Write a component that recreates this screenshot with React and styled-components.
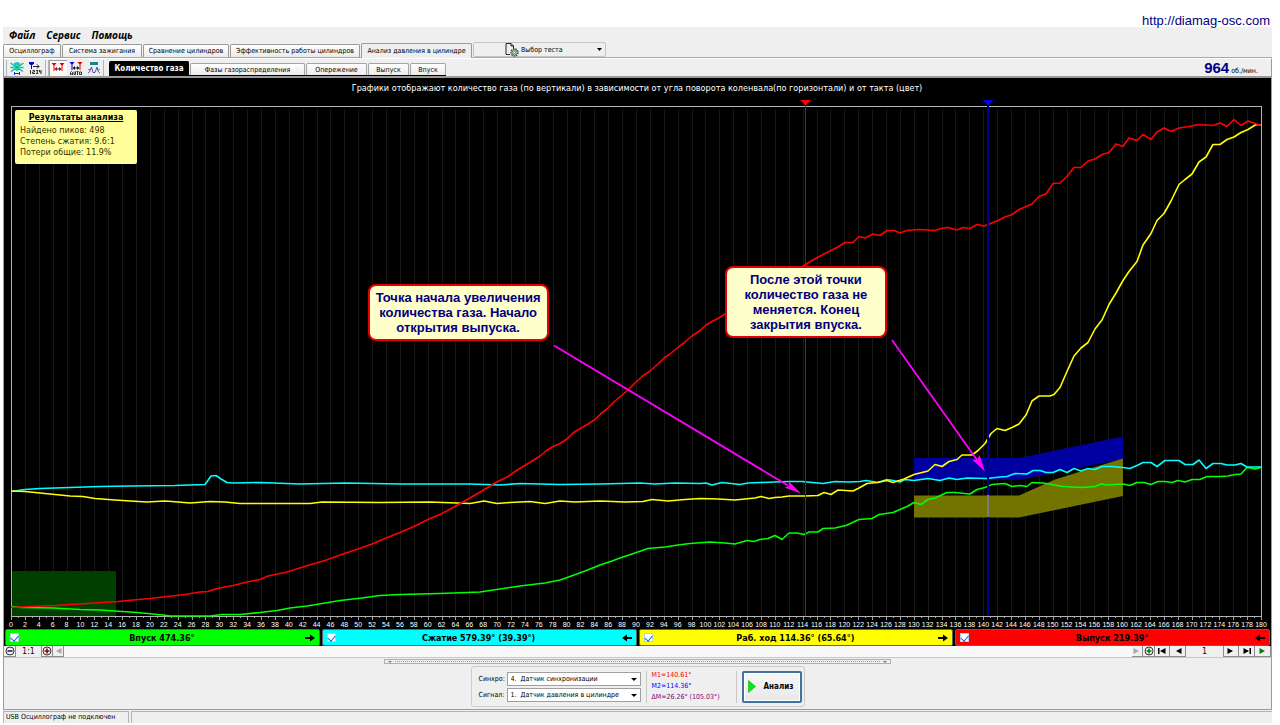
import React, { useState } from 'react';
import styled, { createGlobalStyle } from 'styled-components';

const GlobalStyle = createGlobalStyle`
  * {
    box-sizing: border-box;
  }
  body {
    margin: 0;
    background: #ffffff;
    color: #000000;
    font-family: "DejaVu Sans Condensed", "DejaVu Sans", sans-serif;
    font-size: 7px;
    line-height: 10px;
  }
  button, input, select {
    margin: 0;
    padding: 0;
    border: 0;
    border-radius: 0;
    background: none;
    color: inherit;
    font: inherit;
  }
`;

const Page = styled.div`
  padding: 0 8px 3px 3px;
`;

const SiteHeader = styled.header`
  display: flex;
  justify-content: flex-end;
  align-items: flex-end;
  height: 27px;
  padding-right: 2px;
`;

const SiteLink = styled.a`
  color: #000080;
  font-family: "Liberation Sans", Arial, sans-serif;
  font-size: 13px;
  line-height: 13px;
  text-decoration: none;
`;

const Window = styled.main`
  background: #efefef;
`;

const MenuBar = styled.nav`
  display: flex;
  gap: 11px;
  height: 16px;
  padding: 0 6px;
`;

const MenuItem = styled.button`
  font-family: "Open Sans", sans-serif;
  font-size: 10px;
  line-height: 14px;
  font-weight: 700;
  font-style: italic;
`;

const TabRow = styled.div`
  display: flex;
  align-items: flex-end;
  gap: 1px;
  height: 15px;
  border-bottom: 1px solid #a8a8a8;
`;

const Tab = styled.button`
  width: ${p => p.w}px;
  height: ${p => (p.active ? 15 : 13)}px;
  margin-bottom: ${p => (p.active ? -1 : 0)}px;
  border: 1px solid #9a9a9a;
  border-bottom: 0;
  border-radius: 2px 2px 0 0;
  background: ${p => (p.active ? '#efefef' : 'linear-gradient(#ffffff, #ebebeb)')};
  white-space: nowrap;
`;

const TestPicker = styled.button`
  display: flex;
  align-items: center;
  gap: 2px;
  width: 133px;
  height: 15px;
  padding: 0 3px 0 31px;
  border: 1px solid #c4c4c4;
  border-radius: 2px;
  text-align: left;
  span {
    flex: 1;
  }
`;

const Frame = styled.section`
  border: 1px solid #9c9c9c;
  border-top-color: #ffffff;
`;

const ToolRow = styled.div`
  display: flex;
  align-items: center;
  height: 19px;
  border-bottom: 2px solid #9a9a9a;
`;

const ToolGroup = styled.div`
  display: flex;
  align-items: center;
  height: 16px;
  margin-left: 2px;
  padding: 0 ${p => (p.wide ? 1 : 0)}px;
  border-left: 1px solid #b4b4b4;
  border-right: 1px solid #b4b4b4;
`;

const ToolButton = styled.button`
  display: flex;
  align-items: center;
  justify-content: center;
  width: 18px;
  height: 16px;
  background: ${p => (p.pressed ? '#fafafa' : 'none')};
  box-shadow: ${p => (p.pressed ? 'inset 1px 1px 0 #a0a0a0' : 'none')};
`;

const InnerTabs = styled.div`
  display: flex;
  align-items: flex-end;
  align-self: flex-end;
  gap: 1px;
  margin-left: 5px;
  border-bottom: 1px solid #000000;
`;

const InnerTab = styled.button`
  width: ${p => p.w}px;
  height: ${p => (p.active ? 14 : 12)}px;
  border: 1px solid ${p => (p.active ? '#000000' : '#a4a4a4')};
  border-bottom: 0;
  border-radius: 2px 2px 0 0;
  background: ${p => (p.active ? '#000000' : 'linear-gradient(#ffffff, #ebebeb)')};
  color: ${p => (p.active ? '#ffffff' : '#000000')};
  font-size: ${p => (p.active ? 8 : 7)}px;
  font-weight: ${p => (p.active ? 700 : 400)};
  white-space: nowrap;
`;

const Rpm = styled.div`
  display: flex;
  align-items: baseline;
  gap: 2px;
  margin-left: auto;
  padding-right: 13px;
  strong {
    color: #000080;
    font-family: "Liberation Sans", Arial, sans-serif;
    font-size: 15px;
    line-height: 17px;
  }
`;

const ChartBox = styled.div`
  position: relative;
  background: #000000;
  > svg {
    display: block;
    width: 100%;
    height: auto;
  }
`;

const AxisText = styled.text`
  fill: #ffffff;
  font-family: "Liberation Sans", Arial, sans-serif;
  font-size: 7px;
  text-anchor: middle;
`;

const TitleText = styled.text`
  fill: #ffffff;
  font-size: 9px;
  text-anchor: middle;
`;

const Results = styled.aside`
  position: absolute;
  left: 11px;
  top: 32px;
  width: 122px;
  padding: 2px 5px 6px;
  border-radius: 2px;
  background: #ffff99;
  color: #333300;
  font-family: "DejaVu Sans", Verdana, sans-serif;
  font-size: 8px;
  line-height: 11px;
  h2 {
    margin: 0 0 2px;
    color: #000000;
    font-size: 8px;
    text-align: center;
    text-decoration: underline;
  }
  p {
    margin: 0;
  }
`;

const Callout = styled.div`
  position: absolute;
  left: ${p => p.left}%;
  top: ${p => p.top}%;
  width: ${p => p.w}px;
  padding: 4px 6px;
  border: 2px solid #e80000;
  border-radius: 8px;
  background: #ffffcc;
  color: #000080;
  font-family: "Liberation Sans", Arial, sans-serif;
  font-size: 13px;
  font-weight: 700;
  line-height: 15px;
  text-align: center;
  white-space: nowrap;
`;

const PhaseRow = styled.div`
  display: grid;
  grid-template-columns: repeat(4, 1fr);
  gap: 2px;
  padding: 1px 1px 0;
  background: #000000;
`;

const Phase = styled.label`
  display: flex;
  align-items: center;
  height: 17px;
  padding: 0 4px;
  border: 1px solid #5a6a5a;
  border-radius: 2px;
  background: ${p => p.color};
  font-size: 9px;
  font-weight: 700;
  span {
    flex: 1;
    text-align: center;
  }
`;

const Check = styled.input`
  appearance: none;
  display: flex;
  justify-content: center;
  width: 9px;
  height: 9px;
  border: 1px solid #b8d0e0;
  background: #ffffff;
  &:checked::after {
    content: "";
    width: 4px;
    height: 6px;
    border: solid #0068e0;
    border-width: 0 1px 1px 0;
    transform: rotate(40deg);
  }
`;

const ScrollRow = styled.div`
  display: flex;
  align-items: stretch;
  height: 12px;
  border-bottom: 1px solid #c8c8c8;
  background: #f9f9f9;
`;

const ScrollButton = styled.button`
  display: flex;
  align-items: center;
  justify-content: center;
  width: ${p => p.w}px;
  border-right: 1px solid #8c8c8c;
  border-bottom: 1px solid #8c8c8c;
  background: #f0f0f0;
`;

const ScrollValue = styled.output`
  width: ${p => p.w}px;
  border-right: 1px solid #8c8c8c;
  background: #f0f0f0;
  color: #300010;
  font-family: "DejaVu Sans", Verdana, sans-serif;
  font-size: 8px;
  line-height: 12px;
  text-align: center;
`;

const ScrollTrack = styled.div`
  flex: 1;
`;

const BottomPanel = styled.div`
  display: flex;
  flex-direction: column;
  align-items: center;
  gap: 2px;
  padding: 1px 0 2px;
`;

const Splitter = styled.div`
  display: flex;
  align-items: center;
  justify-content: space-between;
  width: 40%;
  height: 5px;
  padding: 0 3px;
  border: 1px solid #b0b0b0;
  &::before, &::after {
    content: "";
    border: 2px solid transparent;
    border-top-color: #3388ee;
    border-bottom: 0;
  }
  i {
    flex: 1;
    margin: 0 3px;
    border-top: 1px dotted #66aaee;
  }
`;

const ControlGroup = styled.div`
  display: flex;
  align-items: center;
  gap: 5px;
  height: 41px;
  padding: 0 2px 0 7px;
  border: 1px solid #cccccc;
  border-radius: 3px;
`;

const Fields = styled.div`
  display: grid;
  grid-template-columns: 26px 134px;
  align-items: center;
  gap: 2px;
  label {
    white-space: nowrap;
  }
`;

const SelectBox = styled.div`
  position: relative;
  &::after {
    content: "";
    position: absolute;
    right: 4px;
    top: 6px;
    border: 3px solid transparent;
    border-top-color: #000000;
    border-bottom: 0;
    pointer-events: none;
  }
`;

const Select = styled.select`
  appearance: none;
  display: block;
  width: 100%;
  height: 14px;
  padding: 0 3px;
  border: 1px solid #a0a0a0;
  background: #ffffff;
`;

const Divider = styled.div`
  width: 1px;
  height: 32px;
  background: #c8c8c8;
`;

const Markers = styled.div`
  width: 79px;
  line-height: 11px;
  white-space: nowrap;
`;

const Marker = styled.div`
  color: ${p => p.color};
`;

const AnalyzeButton = styled.button`
  display: flex;
  align-items: center;
  gap: 8px;
  width: 60px;
  height: 32px;
  padding-left: 4px;
  border: 2px solid #42729c;
  border-radius: 2px;
  background: linear-gradient(#f6f6f6, #e8e8e8);
  box-shadow: inset 0 0 0 1px #ffffff;
  font-size: 8px;
  font-weight: 700;
`;

const StatusBar = styled.footer`
  display: flex;
  gap: 2px;
  height: 13px;
  padding-top: 1px;
`;

const StatusCell = styled.div`
  flex: ${p => (p.grow ? '1' : '0 0 126px')};
  padding-left: 2px;
  border: 1px solid #b4b4b4;
  border-width: 1px ${p => (p.grow ? 0 : 1)}px 0 1px;
  white-space: nowrap;
`;

const TABS = [
  ['Осциллограф', 58],
  ['Система зажигания', 80],
  ['Сравнение цилиндров', 86],
  ['Эффективность работы цилиндров', 130],
  ['Анализ давления в цилиндре', 111],
];

const INNER_TABS = [
  ['Количество газа', 80],
  ['Фазы газораспределения', 115],
  ['Опережение', 61],
  ['Выпуск', 41],
  ['Впуск', 36],
];

const PHASES = [
  { id: 'intake', text: 'Впуск 474.36°', color: '#00ff00', dir: 1 },
  { id: 'compression', text: 'Сжатие 579.39° (39.39°)', color: '#00ffff', dir: -1 },
  { id: 'power', text: 'Раб. ход 114.36° (65.64°)', color: '#ffff00', dir: 1 },
  { id: 'exhaust', text: 'Выпуск 219.39°', color: '#ff0000', dir: -1 },
];

const CURVES = {
  intake: '11,606.5 20,607.5 53,608 80,609.5 100,610 137,612.5 163,615 170,616 210,616 222,614.5 240,614.5 260,612.5 277,610.5 290,608 307,606 340,600.5 362,598 380,595.5 400,594.5 440,593.5 480,592 500,589 520,586 545,583 560,580 570,576.5 585,571 600,565 612,561 620,558 632,554 648,548.5 665,547 678,545 690,543.5 710,542 725,543 735,544 747,540.5 754,541.5 760,539.5 768,538.5 775,535.5 782,539.5 789,533 797,533 804,534.5 809,532 818,532 823,528.5 835,528 846,525.5 859,519.5 872,518.5 879,514.5 893,512.5 907,506.5 914,502.5 921,504.5 928,499.5 935,498 947,492.5 955,492.5 970,494 977,489.5 985,487.5 992,484.5 1005,483.5 1012,486.5 1020,485.5 1027,486.5 1032,482.5 1043,483 1063,486.5 1082,487.5 1095,486.5 1101,484 1108,485 1123,484 1130,485.5 1137,482.5 1144,482.5 1151,484.5 1158,481.5 1165,481.5 1172,482.5 1178,480.5 1185,482 1192,479.5 1200,479.5 1207,476.5 1220,476.5 1228,476 1235,474.5 1241,474 1247,467.5 1255,469 1261,467.5',
  compression: '11,491.5 25,489.5 40,488.5 70,487.5 100,486.5 130,486 175,485.5 205,484.5 211,476 216,475.5 221,479 227,482.5 233,483 260,482.5 300,484 345,483 400,484 470,484 500,485 520,483.5 560,484.5 600,484 640,483 655,484 675,483 700,483.5 706,483 712,485 722,482.5 740,484.5 748,483 760,482.5 775,482 789,481.5 802,481.5 823,483.5 835,481.5 848,482 860,481.5 866,480.5 878,482.5 887,479.5 893,480.5 900,482 905,479.5 914,480.5 928,478.5 940,480.5 949,478 957,479.5 967,478 987,478.5 1000,477 1007,476.5 1015,473.5 1027,474 1033,470.5 1040,470.5 1046,472.5 1053,472.5 1060,469.5 1067,472.5 1074,468.5 1081,471 1088,468.5 1095,469.5 1102,466.5 1112,466.5 1123,467.5 1130,468.5 1137,465.5 1143,462.5 1151,462.5 1157,466.5 1165,460.5 1179,460.5 1185,464.5 1193,464.5 1199,460 1206,468.5 1213,463.5 1221,463.5 1227,465 1235,465 1241,463.5 1247,467 1261,467',
  power: '11,491 25,491.5 40,493 55,494.5 70,496 83,496.5 95,498.5 115,500 130,501 147,502 165,501 178,502 190,503 210,501.5 225,502 240,503.5 310,503.5 322,502 380,502.5 430,502 470,503.5 484,501 497,503.5 510,502.5 530,501.5 545,503.5 560,501 575,502 600,501 625,502 643,501.5 652,499.5 668,501 685,499.5 700,498.5 718,499 735,500 755,498 761,496.5 769,498.5 775,497.5 782,497 789,496 805,496 818,495.5 824,492.5 831,494.5 838,490 853,491 859,488 867,483.5 877,482.5 887,480.5 893,482.5 904,479 914,474.5 928,471 935,464.5 942,466.5 949,461.5 957,459.5 962,455 972,455 978,450.5 985,443.5 991,433.5 997,428.5 1005,430.5 1012,427.5 1019,424 1026,415 1032,401 1039,396 1050,396 1054,394.5 1060,387.5 1067,371.5 1074,356 1081,348 1088,342.5 1095,329 1102,320 1109,304.5 1116,293 1123,280.5 1129,271.5 1137,261.5 1143,245 1151,233.5 1157,220.5 1164,213.5 1171,201 1179,184.5 1185,179.5 1192,174 1199,162 1206,157 1213,144.5 1220,144.5 1227,139.5 1234,137 1241,132.5 1248,129.5 1256,124.5 1261,125',
  exhaust: '11,607.5 30,606.5 56,605.5 70,604.5 95,603 118,601.5 133,600 150,598.5 167,596.5 185,594.5 200,592 208,591.5 217,588.5 233,585.5 247,582 260,579.5 268,576 287,572 306,566 325,560.5 343,554 358,549 372,544 386,538 400,532.5 415,526 428,519.5 441,514 455,506.5 468,499 482,491 495,483 508,476.5 518,469.5 529,463 540,456 546,451 553,446.5 560,443.5 567,439 573,433 581,428 588,424 595,419.5 601,413.5 607,409 615,401 622,395 628,390 635,383 642,376.5 650,371 657,365 664,358 670,354 678,347.5 685,342 692,336 700,330.5 706,325 712,321.5 718,318.5 725,314 740,303 770,284 795,270 803,266 813,260 823,254.5 830,251 837,247.5 845,242.5 853,242.5 859,236.5 865,238 873,234 880,235.5 887,230.5 894,230.5 900,233 907,230.5 918,229.5 935,230.5 941,228.5 948,227.5 957,230 963,227.5 970,228.5 977,224.5 984,226 988,224.5 998,220.5 1005,217 1012,214.5 1019,209.5 1032,204 1039,196.5 1046,194 1053,183.5 1060,183 1067,176.5 1074,167.5 1081,167.5 1088,161 1095,159 1102,154.5 1109,152.5 1116,144 1123,146.5 1129,138 1137,140.5 1143,134.5 1151,139.5 1157,132 1164,128 1171,131.5 1179,128 1192,126 1198,124.5 1213,125.5 1220,123 1227,126.5 1234,119.5 1241,125.5 1248,121 1261,125.5',
};

const degX = deg => 11 + (deg * 1250) / 180;
const EVEN = Array.from({ length: 91 }, (_, i) => i * 2);
const ALL = Array.from({ length: 181 }, (_, i) => i);

function GasChart({ shown }) {
  return (
    <svg viewBox="4 78 1267 550" role="img" aria-label="Количество газа">
      <rect x="4" y="78" width="1267" height="550" fill="#000" />
      <TitleText x="637" y="91">
        Графики отображают количество газа (по вертикали) в зависимости от угла поворота коленвала(по горизонтали) и от такта (цвет)
      </TitleText>
      <g stroke="#171717">
        {EVEN.map(d => <line key={d} x1={Math.round(degX(d)) + 0.5} x2={Math.round(degX(d)) + 0.5} y1="109" y2="616" />)}
      </g>
      <rect x="12" y="571" width="104" height="45" fill="#003f00" />
      <path d="M914 458H1019L1123 436.500V459L1019 480H914z" fill="#0000a0" />
      <path d="M914 495.500H1019L1055 479.500L1090 468.500L1123 458.500V496L1019 517.500H914z" fill="#737300" />
      <rect x="11.500" y="106.500" width="1250" height="510" fill="none" stroke="#b4b4b4" />
      <g stroke="#a0a0a0">
        {ALL.map(d => <line key={d} x1={Math.round(degX(d)) + 0.5} x2={Math.round(degX(d)) + 0.5} y1="617" y2={d % 2 ? 618 : 620} />)}
      </g>
      {EVEN.map(d => <AxisText key={d} x={degX(d)} y="627">{d}</AxisText>)}
      <g fill="none" strokeWidth="1.600" strokeLinejoin="round">
        {PHASES.filter(p => shown[p.id]).map(p => <polyline key={p.id} points={CURVES[p.id]} stroke={p.color} />)}
      </g>
      <rect x="805" y="106" width="1" height="510" fill="#c00000" />
      <rect x="987" y="106" width="2" height="510" fill="#00008c" />
      <rect x="987" y="495" width="2" height="22" fill="#7c7c7c" />
      <path d="M800 100H811L805.500 105.500z" fill="#ff0000" />
      <path d="M982.500 100H993.500L988 105.500z" fill="#0000ff" />
      <g stroke="#ff00ff" strokeWidth="1.800" fill="#ff00ff">
        <line x1="554" y1="345.500" x2="788" y2="485.500" />
        <path d="M801 493.500L784.500 487.500L789 486L788.500 481z" stroke="none" />
        <line x1="892" y1="340" x2="977" y2="460" />
        <path d="M985 471.500L972 459.500L977 460L979.500 455z" stroke="none" />
      </g>
    </svg>
  );
}

function Arrow({ dir }) {
  return (
    <svg width="10" height="8" viewBox="0 0 10 8">
      <path d={dir > 0 ? 'M0 3H5V0.500L10 4L5 7.500V5H0z' : 'M10 3H5V0.500L0 4L5 7.500V5H10z'} />
    </svg>
  );
}

function ZoomIcon({ plus, color }) {
  return (
    <svg width="10" height="10" viewBox="0 0 10 10" fill="none">
      <circle cx="5" cy="5" r="4" stroke="#333" />
      <path d={plus ? 'M2.500 5H7.500M5 2.500V7.500' : 'M2.500 5H7.500'} stroke={color} strokeWidth="1.600" />
    </svg>
  );
}

function PlayIcon({ back, bar, color = '#000' }) {
  return (
    <svg width="8" height="8" viewBox="0 0 8 8" fill={color}>
      <g transform={back ? 'rotate(180 4 4)' : undefined}>
        <path d="M0.500 1L6 4L0.500 7z" />
        {bar && <path d="M6.500 1H8V7H6.500z" />}
      </g>
    </svg>
  );
}

function ScopeIcon() {
  return (
    <svg width="14" height="14" viewBox="0 0 14 14" fill="none">
      <path d="M3.500 2.500Q7 -0.500 10.500 2.500L9.500 4.500H4.500z" fill="#18c8b8" />
      <path d="M0.500 2L4 4.500M13.500 2L10 4.500M0.500 6.500H4M13.500 6.500H10M1 10.500L4.500 8M13 10.500L9.500 8" stroke="#10b8a8" strokeWidth="1.400" />
      <path d="M3.500 4.500H10.500L9.500 8.500L7 10.500L4.500 8.500z" fill="#20d8c8" />
      <path d="M4.500 4L9.500 9M9.500 4L4.500 9" stroke="#20a040" />
      <path d="M4.500 12.500H9.500M4.500 11V14M9.500 11V14" stroke="#2030d0" />
    </svg>
  );
}

function StepIcon() {
  return (
    <svg width="14" height="14" viewBox="0 0 14 14" fill="none">
      <path d="M1 1H6V2.500L4.500 4H2.500L1 2.500z" fill="#0000e8" />
      <path d="M3.500 3V8" stroke="#0000e8" />
      <path d="M5 5.500H11M9 3.500L11 5.500L9 7.500" stroke="#222" />
      <path d="M2.500 9V13M4.500 9.500H6.500V11H4.500V12.500H7M8 9.500H10L9 11L10 12.500H8M11.500 9V11H13M13 9V13" stroke="#333" />
    </svg>
  );
}

function MarkersIcon({ auto }) {
  const y = auto ? 0 : 1;
  return (
    <svg width="14" height="14" viewBox="0 0 14 14" fill="none">
      <g transform={`translate(0 ${y})`}>
        <path d="M0.500 1H5.500L3.500 3.500V9H2.500V3.500z" fill={auto ? '#0000e8' : '#e80000'} />
        <path d="M8.500 1H13.500L11.500 3.500V9H10.500V3.500z" fill="#e80000" />
        <path d="M4 7H10" stroke={auto ? '#222' : '#901010'} />
        <path d="M3.500 7L6 5V9zM10.500 7L8 5V9z" fill={auto ? '#222' : '#901010'} />
      </g>
      {auto && (
        <path d="M1.500 14V11.500L2.500 10.500L3.500 11.500V14M1.500 13H3.500M5 10.500V13.500H6.500V10.500M7.500 10.500H9.500M8.500 10.500V14M10.500 11H12.500V13.500H10.500z" stroke="#333" />
      )}
    </svg>
  );
}

function WaveIcon() {
  return (
    <svg width="14" height="14" viewBox="0 0 14 14" fill="none">
      <rect x="3" y="1" width="8" height="3" fill="#108888" />
      <path d="M1 12L2.500 11L4.500 6L6 11.500H8L10 6L11.500 11L13 12" stroke="#5050b0" />
      <path d="M1 8.500H3M11 8.500H13" stroke="#888" />
    </svg>
  );
}

function TestIcon() {
  return (
    <svg width="14" height="14" viewBox="0 0 14 14" fill="none">
      <path d="M1 0.500H6L8.500 3V6M6 0.500V3H8.500M1 0.500V11.500H5" stroke="#222" />
      <circle cx="9.500" cy="9.500" r="3.500" stroke="#405040" strokeWidth="1.500" strokeDasharray="1.600 .8" />
      <circle cx="9.500" cy="9.500" r="2.600" fill="#c8dcc8" stroke="#587858" />
      <circle cx="9.500" cy="9.500" r="1" fill="#fff" stroke="#405040" strokeWidth=".6" />
    </svg>
  );
}

export default function App() {
  const [tab, setTab] = useState(4);
  const [innerTab, setInnerTab] = useState(0);
  const [shown, setShown] = useState({ intake: true, compression: true, power: true, exhaust: true });

  const toggle = id => {
    setShown(prev => ({ ...prev, [id]: !prev[id] }));
  };

  return (
    <Page>
      <GlobalStyle />
      <SiteHeader>
        <SiteLink href="http://diamag-osc.com">http://diamag-osc.com</SiteLink>
      </SiteHeader>
      <Window>
        <MenuBar>
          <MenuItem>Файл</MenuItem>
          <MenuItem>Сервис</MenuItem>
          <MenuItem>Помощь</MenuItem>
        </MenuBar>
        <TabRow>
          {TABS.map(([name, w], i) => (
            <Tab key={name} w={w} active={tab === i} onClick={() => setTab(i)}>{name}</Tab>
          ))}
          <TestPicker>
            <TestIcon />
            <span>Выбор теста</span>
            <svg width="5" height="3" viewBox="0 0 5 3"><path d="M0 0H5L2.500 3z" /></svg>
          </TestPicker>
        </TabRow>
        <Frame>
          <ToolRow>
            <ToolGroup wide>
              <ToolButton aria-label="Осциллограф"><ScopeIcon /></ToolButton>
              <ToolButton aria-label="Шаг"><StepIcon /></ToolButton>
            </ToolGroup>
            <ToolGroup>
              <ToolButton pressed aria-label="Маркеры"><MarkersIcon /></ToolButton>
              <ToolButton aria-label="Авто"><MarkersIcon auto /></ToolButton>
              <ToolButton aria-label="Сигнал"><WaveIcon /></ToolButton>
            </ToolGroup>
            <InnerTabs>
              {INNER_TABS.map(([name, w], i) => (
                <InnerTab key={name} w={w} active={innerTab === i} onClick={() => setInnerTab(i)}>{name}</InnerTab>
              ))}
            </InnerTabs>
            <Rpm><strong>964</strong>об./мин.</Rpm>
          </ToolRow>
          <ChartBox>
            <GasChart shown={shown} />
            <Results>
              <h2>Результаты анализа</h2>
              <p>Найдено пиков: 498</p>
              <p>Степень сжатия: 9.6:1</p>
              <p>Потери общие: 11.9%</p>
            </Results>
            <Callout left={28.7} top={37.5} w={181}>
              Точка начала увеличения<br />количества газа. Начало<br />открытия выпуска.
            </Callout>
            <Callout left={56.9} top={34.2} w={162}>
              После этой точки<br />количество газа не<br />меняется. Конец<br />закрытия впуска.
            </Callout>
          </ChartBox>
          <PhaseRow>
            {PHASES.map(p => (
              <Phase key={p.id} color={p.color}>
                <Check type="checkbox" checked={shown[p.id]} onChange={() => toggle(p.id)} />
                <span>{p.text}</span>
                <Arrow dir={p.dir} />
              </Phase>
            ))}
          </PhaseRow>
          <ScrollRow>
            <ScrollButton w={12} aria-label="Уменьшить"><ZoomIcon color="#202080" /></ScrollButton>
            <ScrollValue w={26}>1:1</ScrollValue>
            <ScrollButton w={11} aria-label="Увеличить"><ZoomIcon plus color="#a00000" /></ScrollButton>
            <ScrollButton w={11} aria-label="Влево"><PlayIcon back color="#aaa" /></ScrollButton>
            <ScrollTrack />
            <ScrollButton w={11} aria-label="Вправо"><PlayIcon color="#aaa" /></ScrollButton>
            <ScrollButton w={12} aria-label="Добавить"><ZoomIcon plus color="#008000" /></ScrollButton>
            <ScrollButton w={15} aria-label="В начало"><PlayIcon back bar /></ScrollButton>
            <ScrollButton w={16} aria-label="Назад"><PlayIcon back /></ScrollButton>
            <ScrollValue w={38}>1</ScrollValue>
            <ScrollButton w={15} aria-label="Вперёд"><PlayIcon /></ScrollButton>
            <ScrollButton w={16} aria-label="В конец"><PlayIcon bar /></ScrollButton>
            <ScrollButton w={16} aria-label="Пуск"><PlayIcon color="#008000" /></ScrollButton>
          </ScrollRow>
          <BottomPanel>
            <Splitter><i /></Splitter>
            <ControlGroup>
              <Fields>
                <label htmlFor="sync">Синхро:</label>
                <SelectBox>
                  <Select id="sync"><option>{'4.\u00a0 Датчик синхронизации'}</option></Select>
                </SelectBox>
                <label htmlFor="signal">Сигнал:</label>
                <SelectBox>
                  <Select id="signal"><option>{'1.\u00a0 Датчик давления в цилиндре'}</option></Select>
                </SelectBox>
              </Fields>
              <Divider />
              <Markers>
                <Marker color="#ff0000">М1=140.61°</Marker>
                <Marker color="#0000ff">М2=114.36°</Marker>
                <Marker color="#800080">∆М=26.26° (105.03°)</Marker>
              </Markers>
              <Divider />
              <AnalyzeButton>
                <svg width="8" height="13" viewBox="0 0 8 13"><path d="M.5 .5V12.500L7.500 6.500z" fill="#00f000" stroke="#20a020" strokeWidth=".6" /></svg>
                Анализ
              </AnalyzeButton>
            </ControlGroup>
          </BottomPanel>
        </Frame>
        <StatusBar>
          <StatusCell>USB Осциллограф не подключен</StatusCell>
          <StatusCell grow />
        </StatusBar>
      </Window>
    </Page>
  );
}
